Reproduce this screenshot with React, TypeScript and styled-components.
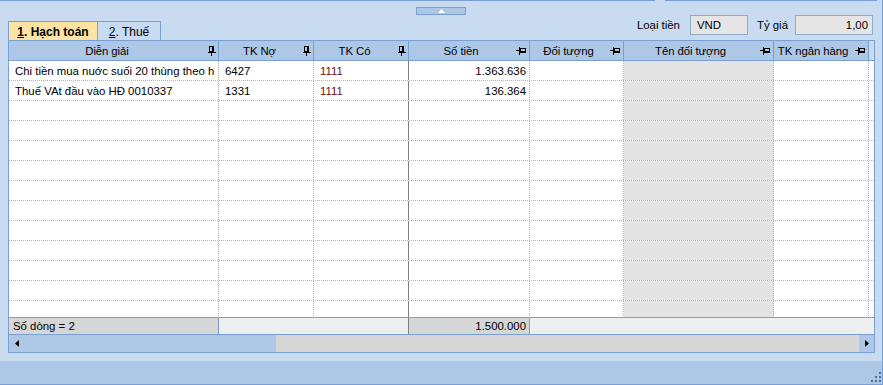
import React from 'react'
import styled, { createGlobalStyle } from 'styled-components'

const pageBg = '#c9dbf1'
const headBg = '#adc7e6'
const edge = '#7a9fd2'
const dotted = '#b4b4b4'

const GlobalStyle = createGlobalStyle`
  html, body {
    margin: 0;
    padding: 0;
  }
  body {
    font-family: "Liberation Sans", Arial, sans-serif;
    font-size: 11.4px;
    color: #000;
  }
`

const Page = styled.div`
  width: 883px;
  height: 385px;
  box-sizing: border-box;
  background: ${pageBg};
  border-right: 1px solid ${edge};
  display: flex;
  flex-direction: column;
  overflow: hidden;
`

const TopEdge = styled.div`
  display: flex;
  gap: 10px;
  height: 1px;
`

const EdgeLine = styled.div<{ $w: number }>`
  width: ${(p) => p.$w}px;
  background: ${edge};
`

const SplitRow = styled.div`
  height: 14px;
  display: flex;
  justify-content: center;
`

const CollapseButton = styled.button`
  box-sizing: border-box;
  margin-top: 6px;
  width: 50px;
  height: 8px;
  padding: 0;
  border: 1px solid ${edge};
  background: ${headBg};
  display: flex;
  align-items: center;
  justify-content: center;
`

const Toolbar = styled.div`
  height: 25px;
  display: flex;
  padding-left: 8px;
  padding-right: 9px;
`

const TabStrip = styled.div`
  display: flex;
  align-self: flex-end;
`

const Tab = styled.div<{ $active?: boolean; $w: number }>`
  box-sizing: border-box;
  width: ${(p) => p.$w}px;
  height: 19px;
  margin-left: ${(p) => (p.$active ? 0 : -1)}px;
  border: 1px solid ${edge};
  border-bottom: none;
  background: ${(p) => (p.$active ? '#fee4a4' : pageBg)};
  font-weight: ${(p) => (p.$active ? 'bold' : 'normal')};
  font-size: 12px;
  display: flex;
  align-items: center;
  justify-content: center;
  padding-top: 1px;

  u {
    text-decoration: underline;
  }
`

const Fields = styled.div`
  margin-left: auto;
  display: flex;
  align-items: center;
  height: 20px;
`

const FieldLabel = styled.span<{ $gap: number }>`
  margin-right: ${(p) => p.$gap}px;
`

const FieldBox = styled.div<{ $w: number; $right?: boolean }>`
  box-sizing: border-box;
  width: ${(p) => p.$w}px;
  height: 20px;
  border: 1px solid #93a9c8;
  background: #e5e5e5;
  display: flex;
  align-items: center;
  justify-content: ${(p) => (p.$right ? 'flex-end' : 'flex-start')};
  padding: 0 4px 0 6px;
  margin-right: 9px;

  &:last-child {
    margin-right: 0;
  }
`

const Grid = styled.div`
  margin-left: 8px;
  width: 867px;
  box-sizing: border-box;
  border: 1px solid ${edge};
  display: flex;
  flex-direction: column;
`

const cols = '210px 95px 95px 121px 94px 150px 95px 1fr'

const HeaderRow = styled.div`
  display: grid;
  grid-template-columns: ${cols};
  height: 20px;
  box-sizing: border-box;
  border-bottom: 1px solid ${edge};
  background: ${headBg};
`

const HeadCell = styled.div<{ $filler?: boolean }>`
  display: flex;
  align-items: center;
  gap: 3px;
  border-right: ${(p) => (p.$filler ? 'none' : `1px solid ${edge}`)};
  background: ${(p) => (p.$filler ? pageBg : 'transparent')};
  padding-right: 2px;
  min-width: 0;

  svg {
    flex: none;
  }
`

const HeadText = styled.span`
  flex: 1;
  text-align: center;
  white-space: nowrap;
  letter-spacing: -0.1px;
`

const Body = styled.div`
  height: 256px;
  overflow: hidden;
  background: #fff;
`

const Row = styled.div`
  display: grid;
  grid-template-columns: ${cols};
  height: 20px;
  box-sizing: border-box;
  border-bottom: 1px dotted ${dotted};
`

const Cell = styled.div<{ $right?: boolean; $solid?: boolean; $grey?: boolean; $red?: boolean; $filler?: boolean }>`
  display: flex;
  align-items: center;
  justify-content: ${(p) => (p.$right ? 'flex-end' : 'flex-start')};
  padding: ${(p) => (p.$right ? '0 3px 0 0' : '0 0 0 6px')};
  border-right: ${(p) =>
    p.$filler ? 'none' : p.$solid ? '1px solid #7f7f7f' : `1px dotted ${dotted}`};
  background: ${(p) => (p.$grey ? '#e4e4e4' : 'transparent')};
  color: ${(p) => (p.$red ? '#6e1212' : '#000')};
  white-space: nowrap;
  overflow: hidden;
  min-width: 0;
`

const FooterRow = styled.div`
  display: grid;
  grid-template-columns: 210px 190px 121px 1fr;
  height: 17px;
  box-sizing: border-box;
  border-top: 1px solid ${edge};
`

const FootCell = styled.div<{ $light?: boolean; $right?: boolean; $solid?: boolean; $last?: boolean }>`
  display: flex;
  align-items: center;
  justify-content: ${(p) => (p.$right ? 'flex-end' : 'flex-start')};
  padding: ${(p) => (p.$right ? '0 3px 0 0' : '0 0 0 4px')};
  background: ${(p) => (p.$light ? '#efefef' : '#d6d6d6')};
  border-right: ${(p) => (p.$last ? 'none' : p.$solid ? '1px solid #7f7f7f' : `1px solid ${edge}`)};
`

const HScroll = styled.div`
  display: flex;
  height: 18px;
  box-sizing: border-box;
  border-top: 1px solid ${edge};
`

const Thumb = styled.div`
  width: 267px;
  background: ${headBg};
  display: flex;
  align-items: center;
  padding-left: 6px;
  box-sizing: border-box;
`

const Track = styled.div`
  flex: 1;
  background: #d6d6d6;
`

const ArrowButton = styled.div`
  width: 15px;
  background: ${headBg};
  display: flex;
  align-items: center;
  justify-content: center;
`

const Spacer = styled.div`
  height: 8px;
`

const StatusBar = styled.div`
  height: 24px;
  box-sizing: border-box;
  background: ${headBg};
  border-bottom: 1px solid ${edge};
  display: flex;
  justify-content: flex-end;
  align-items: flex-end;
  padding: 0 1px 2px 0;
`

const PinDown = () => (
  <svg width="8" height="10" viewBox="0 0 8 10">
    <rect x="1.5" y="0.5" width="4" height="5" fill="none" stroke="#000" />
    <rect x="4" y="0" width="2" height="6" fill="#000" />
    <rect x="0" y="6" width="8" height="1" fill="#000" />
    <rect x="3" y="7" width="1" height="3" fill="#000" />
  </svg>
)

const PinLeft = () => (
  <svg width="11" height="8" viewBox="0 0 11 8">
    <rect x="0" y="3" width="3" height="1" fill="#000" />
    <rect x="3" y="0" width="1" height="8" fill="#000" />
    <rect x="4.5" y="1.5" width="5" height="4" fill="none" stroke="#000" />
    <rect x="4" y="4" width="6" height="2" fill="#000" />
  </svg>
)

const columns = [
  { title: 'Diễn giải', pin: 'down' },
  { title: 'TK Nợ', pin: 'down' },
  { title: 'TK Có', pin: 'down' },
  { title: 'Số tiền', pin: 'left' },
  { title: 'Đối tượng', pin: 'left' },
  { title: 'Tên đối tượng', pin: 'left' },
  { title: 'TK ngân hàng', pin: 'left' },
]

const rows = [
  { desc: 'Chi tiền mua nuớc suối 20 thùng theo h', debit: '6427', credit: '1111', amount: '1.363.636' },
  { desc: 'Thuế VAt đầu vào HĐ 0010337', debit: '1331', credit: '1111', amount: '136.364' },
]

const blanks = Array.from({ length: 11 }, () => ({ desc: '', debit: '', credit: '', amount: '' }))

export default function App() {
  return (
    <Page>
      <GlobalStyle />
      <TopEdge>
        <EdgeLine $w={655} />
        <EdgeLine $w={212} />
      </TopEdge>
      <SplitRow>
        <CollapseButton>
          <svg width="7" height="4" viewBox="0 0 7 4">
            <path d="M3.5 0 L7 4 L0 4 Z" fill="#fff" />
          </svg>
        </CollapseButton>
      </SplitRow>
      <Toolbar>
        <TabStrip>
          <Tab $active $w={90}>
            <span>
              <u>1</u>. Hạch toán
            </span>
          </Tab>
          <Tab $w={64}>
            <span>
              <u>2</u>. Thuế
            </span>
          </Tab>
        </TabStrip>
        <Fields>
          <FieldLabel $gap={10}>Loại tiền</FieldLabel>
          <FieldBox $w={58}>VND</FieldBox>
          <FieldLabel $gap={7}>Tỷ giá</FieldLabel>
          <FieldBox $w={78} $right>
            1,00
          </FieldBox>
        </Fields>
      </Toolbar>
      <Grid>
        <HeaderRow>
          {columns.map((c) => (
            <HeadCell key={c.title}>
              <HeadText>{c.title}</HeadText>
              {c.pin === 'down' ? <PinDown /> : <PinLeft />}
            </HeadCell>
          ))}
          <HeadCell $filler />
        </HeaderRow>
        <Body>
          {[...rows, ...blanks].map((r, i) => (
            <Row key={i}>
              <Cell>{r.desc}</Cell>
              <Cell>{r.debit}</Cell>
              <Cell $red $solid>
                {r.credit}
              </Cell>
              <Cell $right>{r.amount}</Cell>
              <Cell />
              <Cell $grey />
              <Cell />
              <Cell $filler />
            </Row>
          ))}
        </Body>
        <FooterRow>
          <FootCell>Số dòng = 2</FootCell>
          <FootCell $light $solid />
          <FootCell $right>1.500.000</FootCell>
          <FootCell $light $last />
        </FooterRow>
        <HScroll>
          <Thumb>
            <svg width="4" height="7" viewBox="0 0 4 7">
              <path d="M4 0 L0 3.5 L4 7 Z" fill="#000" />
            </svg>
          </Thumb>
          <Track />
          <ArrowButton>
            <svg width="4" height="7" viewBox="0 0 4 7">
              <path d="M0 0 L4 3.5 L0 7 Z" fill="#000" />
            </svg>
          </ArrowButton>
        </HScroll>
      </Grid>
      <Spacer />
      <StatusBar>
        <svg width="10" height="10" viewBox="0 0 10 10">
          <rect x="8" y="0" width="2" height="2" fill="#4f6f9c" />
          <rect x="4" y="4" width="2" height="2" fill="#4f6f9c" />
          <rect x="8" y="4" width="2" height="2" fill="#4f6f9c" />
          <rect x="0" y="8" width="2" height="2" fill="#4f6f9c" />
          <rect x="4" y="8" width="2" height="2" fill="#4f6f9c" />
          <rect x="8" y="8" width="2" height="2" fill="#4f6f9c" />
        </svg>
      </StatusBar>
    </Page>
  )
}
